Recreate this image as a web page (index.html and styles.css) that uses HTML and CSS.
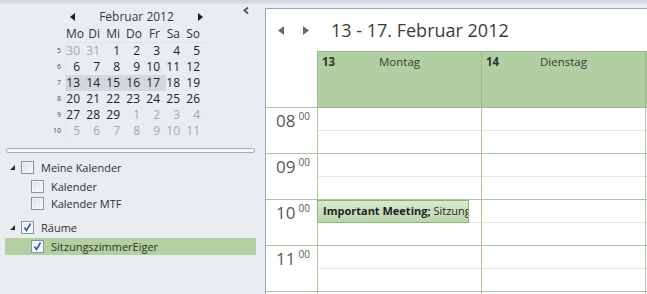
FILE: index.html
```html
<!DOCTYPE html>
<html lang="de">
<head>
  <meta charset="UTF-8" />
  <title>Kalender</title>
  <link rel="stylesheet" href="styles.css">
</head>
<body>

  <div class="topbar"></div>

  <div class="app">

    <!-- Navigation pane -->
    <aside class="nav">
      <div class="nav-top">
        <div class="minical">
          <div class="mc-title">
            <svg class="mc-arrow" width="5" height="8" viewBox="0 0 5 8"><polygon points="5,0 5,8 0,4" /></svg>
            <span>Februar 2012</span>
            <svg class="mc-arrow" width="5" height="8" viewBox="0 0 5 8"><polygon points="0,0 5,4 0,8" /></svg>
          </div>
          <div class="mc-grid">
            <span class="wk head"></span>
            <span class="dow">Mo</span><span class="dow">Di</span><span class="dow">Mi</span><span class="dow">Do</span><span class="dow">Fr</span><span class="dow">Sa</span><span class="dow">So</span>

            <span class="wk">5</span>
            <span class="day other">30</span><span class="day other">31</span><span class="day">1</span><span class="day">2</span><span class="day">3</span><span class="day">4</span><span class="day">5</span>

            <span class="wk">6</span>
            <span class="day">6</span><span class="day">7</span><span class="day">8</span><span class="day">9</span><span class="day">10</span><span class="day">11</span><span class="day">12</span>

            <span class="wk">7</span>
            <span class="day sel">13</span><span class="day sel">14</span><span class="day sel">15</span><span class="day sel">16</span><span class="day sel">17</span><span class="day">18</span><span class="day">19</span>

            <span class="wk">8</span>
            <span class="day">20</span><span class="day">21</span><span class="day">22</span><span class="day">23</span><span class="day">24</span><span class="day">25</span><span class="day">26</span>

            <span class="wk">9</span>
            <span class="day">27</span><span class="day">28</span><span class="day">29</span><span class="day other">1</span><span class="day other">2</span><span class="day other">3</span><span class="day other">4</span>

            <span class="wk">10</span>
            <span class="day other">5</span><span class="day other">6</span><span class="day other">7</span><span class="day other">8</span><span class="day other">9</span><span class="day other">10</span><span class="day other">11</span>
          </div>
        </div>

        <button class="collapse" type="button">
          <svg width="6" height="7" viewBox="0 0 6 7"><polyline points="5,0.5 1.5,3.5 5,6.5" fill="none" stroke="#4a4f55" stroke-width="1.8" /></svg>
        </button>
      </div>

      <div class="pane-sep"></div>

      <!-- Calendar folders -->
      <div class="tree">
        <div class="tree-group">
          <svg class="twisty" width="5" height="5" viewBox="0 0 5 5"><polygon points="5,0 5,5 0,5" /></svg>
          <span class="check"></span>
          <span>Meine Kalender</span>
        </div>
        <div class="tree-item first">
          <span class="check"></span>
          <span>Kalender</span>
        </div>
        <div class="tree-item">
          <span class="check"></span>
          <span>Kalender MTF</span>
        </div>

        <div class="tree-group second">
          <svg class="twisty" width="5" height="5" viewBox="0 0 5 5"><polygon points="5,0 5,5 0,5" /></svg>
          <span class="check on">
            <svg width="11" height="11" viewBox="0 0 11 11"><polyline points="2.5,5.5 4.5,8.5 8.5,1.5" fill="none" stroke="#2b58b5" stroke-width="1.6" /></svg>
          </span>
          <span>Räume</span>
        </div>
        <div class="tree-item active">
          <span class="check on">
            <svg width="11" height="11" viewBox="0 0 11 11"><polyline points="2.5,5.5 4.5,8.5 8.5,1.5" fill="none" stroke="#2b58b5" stroke-width="1.6" /></svg>
          </span>
          <span>SitzungszimmerEiger</span>
        </div>
      </div>
    </aside>

    <div class="splitter"></div>

    <!-- Week view -->
    <main class="week">
      <div class="week-title">
        <svg class="wk-arrow" width="6" height="9" viewBox="0 0 6 9"><polygon points="6,0 6,9 0,4.5" /></svg>
        <svg class="wk-arrow next" width="6" height="9" viewBox="0 0 6 9"><polygon points="0,0 6,4.5 0,9" /></svg>
        <h1>13 - 17. Februar 2012</h1>
      </div>

      <div class="day-head">
        <div class="corner"></div>
        <div class="dh"><b>13</b><span>Montag</span></div>
        <div class="dh"><b>14</b><span>Dienstag</span></div>
        <div class="dh last"></div>
      </div>

      <div class="hours">
        <div class="hour">
          <div class="time">08<span class="min">00</span></div>
          <div class="slot"></div>
          <div class="slot"></div>
          <div class="slot last"></div>
        </div>
        <div class="hour">
          <div class="time">09<span class="min">00</span></div>
          <div class="slot"></div>
          <div class="slot"></div>
          <div class="slot last"></div>
        </div>
        <div class="hour">
          <div class="time">10<span class="min">00</span></div>
          <div class="slot">
            <div class="appt"><b>Important Meeting;</b> Sitzung</div>
          </div>
          <div class="slot"></div>
          <div class="slot last"></div>
        </div>
        <div class="hour">
          <div class="time">11<span class="min">00</span></div>
          <div class="slot"></div>
          <div class="slot"></div>
          <div class="slot last"></div>
        </div>
        <div class="hour">
          <div class="time"></div>
          <div class="slot"></div>
          <div class="slot"></div>
          <div class="slot last"></div>
        </div>
      </div>
    </main>

  </div>
</body>
</html>
```

FILE: styles.css
```css
* {
  box-sizing: border-box;
  margin: 0;
  padding: 0;
}

html, body {
  width: 647px;
  height: 294px;
  overflow: hidden;
}

body {
  font-family: 'Open Sans', 'Noto Sans', sans-serif;
  font-size: 12px;
  color: #2e2e2e;
  background-color: #e9edf1;
}

.topbar {
  height: 4px;
  background: linear-gradient(to bottom, #cdd2d8, #dfe3e8);
}

.app {
  display: flex;
  height: 290px;
}

/* ---------- navigation pane ---------- */

.nav {
  width: 258px;
  flex-shrink: 0;
}

.nav-top {
  display: flex;
  align-items: flex-start;
}

.minical {
  margin-left: 52px;
  padding-top: 4px;
}

.mc-title {
  display: flex;
  align-items: center;
  justify-content: space-between;
  height: 17px;
  margin-left: 14px;
  padding: 0 3px 0 4px;
  color: #3a3a3a;
  line-height: 17px;
}

.mc-arrow {
  fill: #1e1e1e;
}

.mc-grid {
  display: grid;
  grid-template-columns: 14px repeat(7, 20px);
  grid-template-rows: 18px repeat(6, 16px);
  line-height: 16px;
}

.mc-grid .wk {
  font-size: 7px;
  text-align: right;
  padding-right: 4px;
  color: #4a4a4a;
  border-right: 1px solid #dfe3e7;
}

.mc-grid .wk.head {
  border-right: none;
}

.dow {
  text-align: right;
  padding-right: 6px;
  line-height: 17px;
  color: #333;
  border-bottom: 1px solid #dfe3e7;
}

.day {
  text-align: right;
  padding-right: 6px;
  color: #222;
}

.day.other {
  color: #a3a9b0;
}

.day.sel {
  background-color: #d3d8de;
}

.collapse {
  margin: 3px 9px 0 auto;
  border: none;
  background: none;
  width: 6px;
  height: 7px;
  display: flex;
}

.pane-sep {
  margin: 9px 3px 0 6px;
  height: 5px;
  border: 1px solid #a7afb8;
  border-radius: 2px;
  background-color: #f4f6f8;
}

.tree {
  margin: 4px 2px 0 5px;
  font-size: 11px;
}

.tree-group,
.tree-item {
  display: flex;
  align-items: center;
  color: #303030;
}

.tree-group {
  height: 20px;
  padding-left: 5px;
}

.tree-group.second {
  margin-top: 6px;
  height: 18px;
}

.tree-item {
  height: 17px;
  padding-left: 26px;
}

.tree-item.first {
  margin-top: 1px;
}

.tree-item.active {
  margin-top: 2px;
  background-color: #b2d0a2;
}

.twisty {
  fill: #2a2a2a;
  margin-right: 6px;
}

.check {
  width: 13px;
  height: 13px;
  margin-right: 7px;
  border: 1px solid #8e9398;
  background: linear-gradient(135deg, #dcdfe2, #fbfbfb);
  box-shadow: inset 0 0 0 1px #f4f4f4;
  display: flex;
  align-items: center;
  justify-content: center;
}

.check.on {
  background: linear-gradient(135deg, #eef0f2, #ffffff);
}

/* ---------- week view ---------- */

.splitter {
  width: 7px;
  flex-shrink: 0;
}

.week {
  flex: 1;
  margin-top: 4px;
  background-color: #fff;
  border-left: 1px solid #9ea6af;
  border-top: 1px solid #9ea6af;
  overflow: hidden;
}

.week-title {
  display: flex;
  align-items: center;
  height: 42px;
  padding-left: 12px;
}

.wk-arrow {
  fill: #666b70;
}

.wk-arrow.next {
  margin-left: 19px;
}

.week-title h1 {
  margin-left: 22px;
  font-size: 18px;
  font-weight: normal;
  color: #3c3c3c;
}

.day-head {
  display: flex;
  height: 57px;
}

.corner {
  width: 51px;
  flex-shrink: 0;
  border-bottom: 1px solid #a9c59a;
}

.dh {
  width: 164px;
  flex-shrink: 0;
  display: grid;
  grid-template-columns: 1fr auto 1fr;
  align-items: start;
  padding: 2px 4px 0;
  background-color: #b1cfa2;
  border-left: 1px solid #98bb87;
  border-top: 1px solid #98bb87;
  border-bottom: 1px solid #98bb87;
  color: #3a3a3a;
  font-size: 11.5px;
}

.dh b {
  color: #333;
}

.dh.last {
  flex: 1;
}

.hour {
  display: flex;
  height: 46px;
  border-bottom: 1px solid #a9c59a;
}

.time {
  width: 51px;
  flex-shrink: 0;
  text-align: right;
  padding: 3px 7px 0 0;
  font-size: 17px;
  line-height: 20px;
  color: #585858;
}

.time .min {
  font-size: 10px;
  line-height: 1;
  vertical-align: 7px;
  margin-left: 3px;
}

.slot {
  position: relative;
  width: 164px;
  flex-shrink: 0;
  border-left: 1px solid #a9c59a;
  background: linear-gradient(to bottom, transparent 22px, #e4e9e0 22px, #e4e9e0 23px, transparent 23px);
}

.slot.last {
  flex: 1;
}

.appt {
  position: absolute;
  top: 0;
  left: -1px;
  width: 152px;
  height: 23px;
  padding: 0 3px 0 5px;
  border: 1px solid #8eb37d;
  background: linear-gradient(to bottom, #dbe9d2, #b9d5aa);
  font-size: 11px;
  line-height: 20px;
  white-space: nowrap;
  overflow: hidden;
  color: #1e1e1e;
}
```
